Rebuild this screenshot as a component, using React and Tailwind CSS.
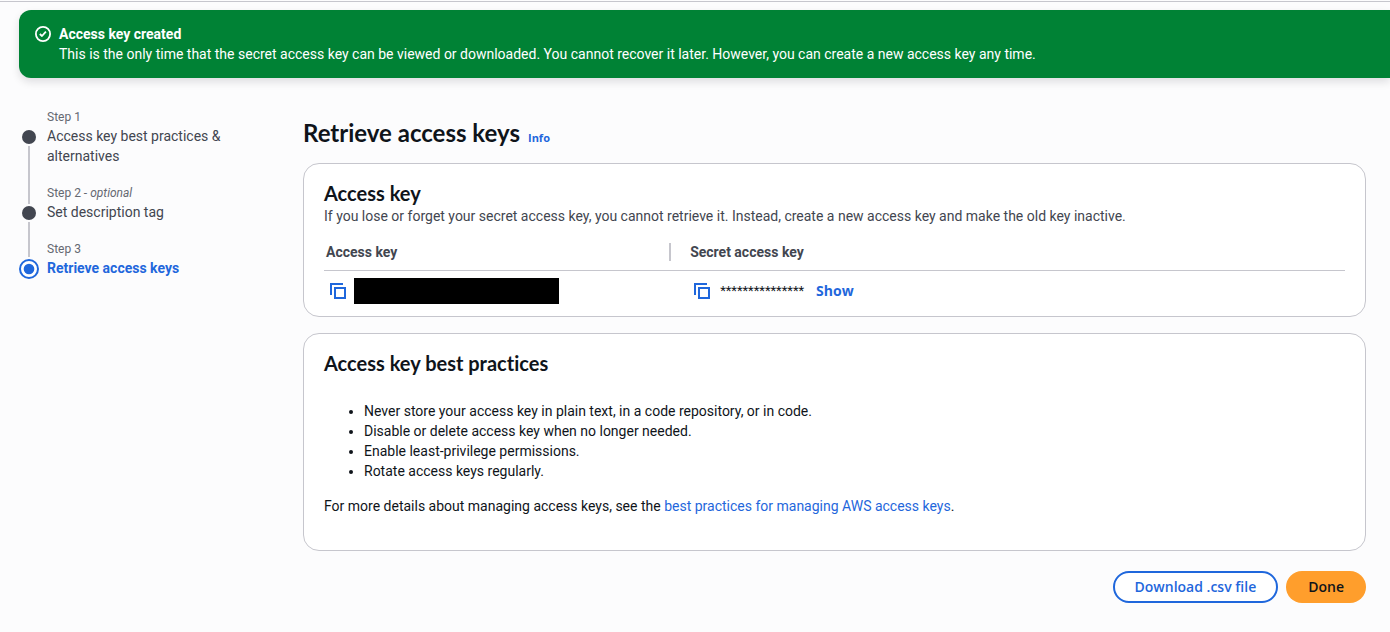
function CheckIcon() {
  return (
    <svg className="mt-0.5 size-4 shrink-0" viewBox="0 0 16 16" fill="none" stroke="currentColor" strokeWidth="1.8" aria-hidden="true">
      <circle cx="8" cy="8" r="7.1" />
      <path d="M4.8 8l2.2 2 3.9-4.3" strokeLinejoin="round" />
    </svg>
  );
}

function CopyButton({ label }) {
  return (
    <button type="button" aria-label={label} className="shrink-0 text-[#1f67dc]">
      <svg className="size-4" viewBox="0 0 16 16" fill="none" stroke="currentColor" strokeWidth="2" aria-hidden="true">
        <path d="M5 5h10v10H5z" />
        <path d="M13 1H1v11" />
      </svg>
    </button>
  );
}

const steps = [
  { label: "Step 1", title: "Access key best practices & alternatives" },
  { label: "Step 2", optional: true, title: "Set description tag" },
  { label: "Step 3", title: "Retrieve access keys", current: true },
];

function Step({ step, first }) {
  return (
    <li className="flex gap-2" aria-current={step.current ? "step" : undefined}>
      <div className="flex w-5 shrink-0 flex-col items-center">
        <span className={`w-0.5 ${step.current ? "h-[17px]" : "h-5"} ${first ? "" : "bg-[#c6c6cd]"}`} />
        {step.current ? (
          <span className="flex h-6 items-center">
            <svg className="size-5" viewBox="0 0 20 20" aria-hidden="true">
              <circle cx="10" cy="10" r="9" fill="white" stroke="#1f67dc" strokeWidth="2" />
              <circle cx="10" cy="10" r="5.3" fill="#1f67dc" />
            </svg>
          </span>
        ) : (
          <>
            <span className="flex h-[18px] items-center">
              <span className="size-3.5 rounded-full bg-[#424650]" />
            </span>
            <span className="w-0.5 grow bg-[#c6c6cd]" />
          </>
        )}
      </div>
      <div className={step.current ? "" : "pb-[18px]"}>
        <div className="text-[12px] leading-[18px] text-[#656871]">
          {step.label}
          {step.optional && <> - <i>optional</i></>}
        </div>
        <div className={step.current ? "font-bold text-[#1f67dc]" : "text-[#424650]"}>{step.title}</div>
      </div>
    </li>
  );
}

const practices = [
  "Never store your access key in plain text, in a code repository, or in code.",
  "Disable or delete access key when no longer needed.",
  "Enable least-privilege permissions.",
  "Rotate access keys regularly.",
];

export default function App() {
  return (
    <div className="min-h-screen overflow-x-hidden bg-[#fcfcfd] pt-px font-['Roboto','Noto_Sans',sans-serif] text-[14px] leading-5 text-[#0f141a] [font-variant-ligatures:none]">
      <div className="border-t border-[#c6c6cd]" />
      <div role="status" className="mt-2 ml-[19px] flex gap-2 rounded-l-xl bg-[#008235] py-3.5 pl-4 text-white shadow-[0_4px_8px_rgba(0,7,22,0.12)]">
        <CheckIcon />
        <div>
          <div className="font-bold">Access key created</div>
          <div>
            This is the only time that the secret access key can be viewed or downloaded. You cannot recover it later. However, you can create a new access key any time.
          </div>
        </div>
      </div>

      <div className="flex pt-[30px] pr-6 pb-6 pl-[19px]">
        <nav aria-label="Steps" className="w-[284px] shrink-0 pr-16">
          <ol>
            {steps.map((step, i) => (
              <Step key={step.label} step={step} first={i === 0} />
            ))}
          </ol>
        </nav>

        <main className="min-w-0 grow pt-2.5">
          <div className="flex items-baseline gap-2">
            <h1 className="font-['Lato',sans-serif] text-[24px] leading-[30px] font-bold">Retrieve access keys</h1>
            <a href="#info" className="font-['Open_Sans',sans-serif] text-[11px] font-bold text-[#1f67dc]">Info</a>
          </div>

          <section className="mt-[15px] rounded-2xl border border-[#c6c6cd] bg-white px-5 pt-[17px] pb-1.5">
            <h2 className="mb-px font-['Lato',sans-serif] text-[20px] leading-6 font-bold">Access key</h2>
            <p className="text-[#424650]">
              If you lose or forget your secret access key, you cannot retrieve it. Instead, create a new access key and make the old key inactive.
            </p>
            <table className="mt-2 w-full table-fixed text-left">
              <thead>
                <tr className="border-b border-[#c6c6cd] text-[#424650]">
                  <th scope="col" className="w-[34%] py-2 pl-0.5 font-bold">
                    <div className="flex items-center justify-between">
                      Access key
                      <span className="h-[18px] w-0.5 bg-[#c6c6cd]" />
                    </div>
                  </th>
                  <th scope="col" className="py-2 pl-[19px] font-bold">Secret access key</th>
                </tr>
              </thead>
              <tbody>
                <tr>
                  <td className="pt-[7px] pb-1.5 pl-1.5">
                    <div className="flex items-center gap-2">
                      <CopyButton label="Copy access key" />
                      <span className="h-[26px] w-[205px] bg-black" />
                    </div>
                  </td>
                  <td className="pt-[7px] pb-1.5 pl-[23px]">
                    <div className="flex items-center">
                      <CopyButton label="Copy secret access key" />
                      <span className="ml-2.5 text-[13px]">***************</span>
                      <button type="button" className="ml-3 font-['Open_Sans',sans-serif] font-bold text-[#1f67dc]">Show</button>
                    </div>
                  </td>
                </tr>
              </tbody>
            </table>
          </section>

          <section className="mt-4 rounded-2xl border border-[#c6c6cd] bg-white px-5 pt-[17px] pb-[34px]">
            <h2 className="font-['Lato',sans-serif] text-[20px] leading-6 font-bold">Access key best practices</h2>
            <ul className="mt-[26px] list-disc pl-10">
              {practices.map((text) => (
                <li key={text}>{text}</li>
              ))}
            </ul>
            <p className="mt-[15px]">
              For more details about managing access keys, see the{" "}
              <a href="#best-practices" className="text-[#1f67dc]">best practices for managing AWS access keys</a>.
            </p>
          </section>

          <div className="mt-5 flex justify-end gap-2 font-['Open_Sans',sans-serif]">
            <button type="button" className="h-8 rounded-full border-2 border-[#1f67dc] bg-white px-5 font-semibold text-[#1f67dc]">
              Download .csv file
            </button>
            <button type="button" className="h-8 rounded-full bg-[#ff9e2c] px-[22px] font-semibold text-[#0f141a]">Done</button>
          </div>
        </main>
      </div>
    </div>
  );
}
